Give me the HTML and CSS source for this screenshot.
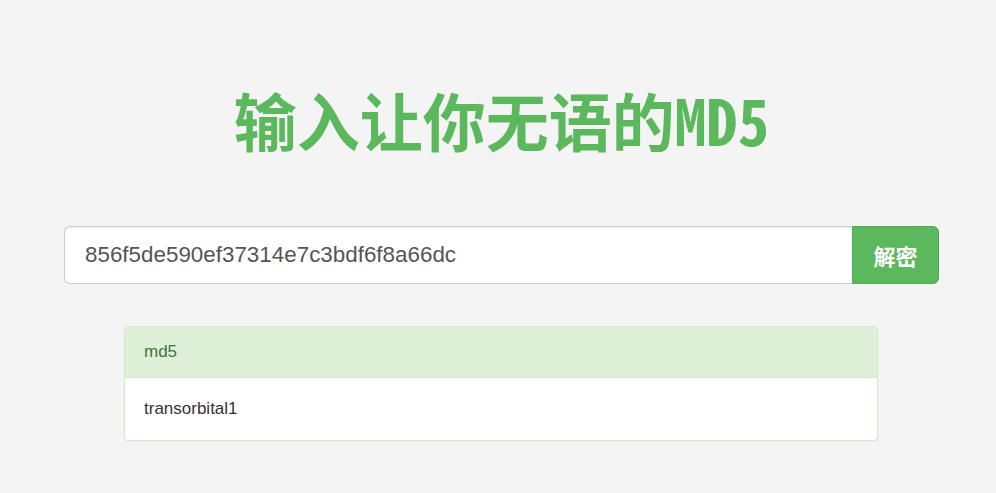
FILE: index.html
```html
<!DOCTYPE html>
<html lang="zh-CN">
<head>
<meta charset="utf-8">
<title>输入让你无语的MD5</title>
<link rel="stylesheet" href="styles.css">
</head>
<body>
<div class="page">
  <h1 class="title">输入让你无语的MD5</h1>
  <form class="search">
    <input class="search-input" type="text" value="856f5de590ef37314e7c3bdf6f8a66dc">
    <button class="search-btn" type="button">解密</button>
  </form>
  <div class="panel">
    <div class="panel-heading">md5</div>
    <div class="panel-body">transorbital1</div>
  </div>
</div>
</body>
</html>
```
FILE: styles.css
```css
html, body {
  margin: 0;
  padding: 0;
  background: #f4f4f4;
}
body {
  font-family: "Liberation Sans", Arial, "Noto Sans CJK SC", sans-serif;
  color: #333;
}
.page {
  padding: 0 57px 0 64px;
}
.title {
  margin: 0;
  padding-top: 88px;
  height: 140px;
  box-sizing: border-box;
  text-align: center;
  font-family: "Noto Sans Mono CJK SC", "Noto Sans CJK SC", monospace;
  font-weight: 700;
  font-size: 63px;
  line-height: 62px;
  color: #5cb85c;
  letter-spacing: 0;
}
.search {
  display: flex;
  margin: 86px 0 0 0;
  height: 58px;
}
.search-input {
  flex: 1;
  min-width: 0;
  box-sizing: border-box;
  height: 58px;
  margin: 0;
  padding: 0 20px;
  border: 1px solid #ccc;
  border-right: 0;
  border-radius: 6px 0 0 6px;
  background: #fff;
  font-family: "Liberation Sans", Arial, sans-serif;
  font-size: 22.4px;
  color: #555;
  outline: none;
  box-shadow: inset 0 1px 1px rgba(0,0,0,.075);
}
.search-btn {
  box-sizing: border-box;
  width: 87px;
  height: 58px;
  margin: 0;
  padding: 0;
  border: 1px solid #4cae4c;
  border-radius: 0 6px 6px 0;
  background: #5cb85c;
  color: #fff;
  font-family: "Noto Sans CJK SC", sans-serif;
  font-weight: 700;
  font-size: 22px;
  line-height: 1;
}
.panel {
  margin: 42px 61px 0 60px;
  border: 1px solid #d6e9c6;
  border-radius: 4px;
  background: #fff;
  box-shadow: 0 1px 1px rgba(0,0,0,.05);
  overflow: hidden;
}
.panel-heading {
  height: 51px;
  box-sizing: border-box;
  padding: 0 19px;
  display: flex;
  align-items: center;
  background: #dff0d8;
  border-bottom: 1px solid #d6e9c6;
  color: #3c763d;
  font-size: 17px;
}
.panel-body {
  height: 62px;
  box-sizing: border-box;
  padding: 0 19px;
  display: flex;
  align-items: center;
  font-size: 17px;
  color: #333;
}
```
